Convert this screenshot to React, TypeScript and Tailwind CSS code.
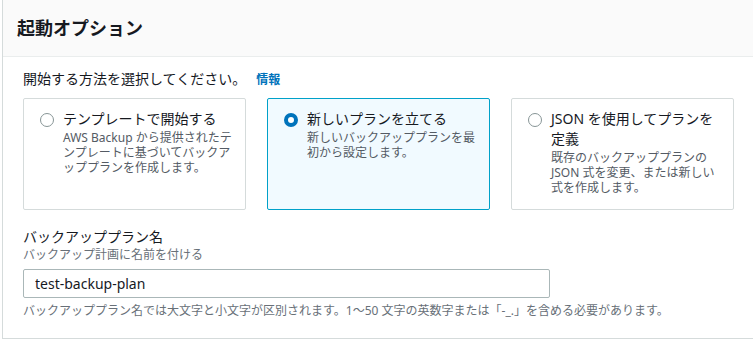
import React from 'react';

const OPTIONS = [
  {
    id: 'template',
    title: 'テンプレートで開始する',
    description: 'AWS Backup から提供されたテンプレートに基づいてバックアッププランを作成します。',
  },
  {
    id: 'new',
    title: '新しいプランを立てる',
    description: '新しいバックアッププランを最初から設定します。',
  },
  {
    id: 'json',
    title: 'JSON を使用してプランを定義',
    description: '既存のバックアッププランの JSON 式を変更、または新しい式を作成します。',
  },
];

const FONT = { fontFamily: '"Noto Sans", "Noto Sans CJK JP", sans-serif' };

export default function App() {
  const selected = 'new';
  return (
    <div className="w-[753px] h-[341px] bg-white overflow-hidden" style={FONT}>
      <div className="ml-[2px] w-[760px] h-[339px] border-l border-b border-[#d5dbdb] bg-white">
        {/* Header */}
        <div className="h-[57px] bg-[#fafafa] border-b border-[#eaeded] pl-[14px] flex items-center">
          <h2 className="text-[18px] font-bold text-[#16191f] leading-none pb-[1px]">起動オプション</h2>
        </div>

        {/* Body */}
        <div className="pl-[20px] pt-[12px] w-[731px]">
          <div className="flex items-baseline gap-[10px] text-[14px] leading-[20px] text-[#16191f]">
            <span>開始する方法を選択してください。</span>
            <span className="text-[12px] font-bold text-[#0073bb]">情報</span>
          </div>

          <div className="mt-[8px] grid grid-cols-3 gap-[21px]">
            {OPTIONS.map((opt) => {
              const active = opt.id === selected;
              return (
                <div
                  key={opt.id}
                  className={`h-[112px] border rounded-[2px] pl-[16px] pr-[10px] pt-[10px] flex gap-[9px] ${
                    active ? 'border-[#00a1c9] bg-[#f1faff]' : 'border-[#d5dbdb] bg-white'
                  }`}
                >
                  <div className="pt-[4px] shrink-0">
                    {active ? (
                      <div className="w-[14px] h-[14px] rounded-full border-[4px] border-[#0073bb] bg-white" />
                    ) : (
                      <div className="w-[14px] h-[14px] rounded-full border border-[#879596] bg-white" />
                    )}
                  </div>
                  <div className="min-w-0">
                    <div className="text-[14px] leading-[20px] text-[#16191f]">{opt.title}</div>
                    <div className="mt-[0.5px] text-[12px] leading-[15px] text-[#545b64]">{opt.description}</div>
                  </div>
                </div>
              );
            })}
          </div>

          <div className="mt-[17px]">
            <div className="text-[14px] leading-[20px] text-[#16191f]">バックアッププラン名</div>
            <div className="text-[12px] leading-[16px] text-[#687078]">バックアップ計画に名前を付ける</div>
            <input
              className="mt-[6px] w-[527px] h-[29px] border border-[#aab7b8] rounded-[2px] px-[11px] text-[14px] text-[#16191f] outline-none"
              defaultValue="test-backup-plan"
              style={FONT}
            />
            <div className="mt-[5px] text-[12px] leading-[16px] text-[#687078]">
              バックアッププラン名では大文字と小文字が区別されます。1〜50 文字の英数字または「-_.」を含める必要があります。
            </div>
          </div>
        </div>
      </div>
    </div>
  );
}
